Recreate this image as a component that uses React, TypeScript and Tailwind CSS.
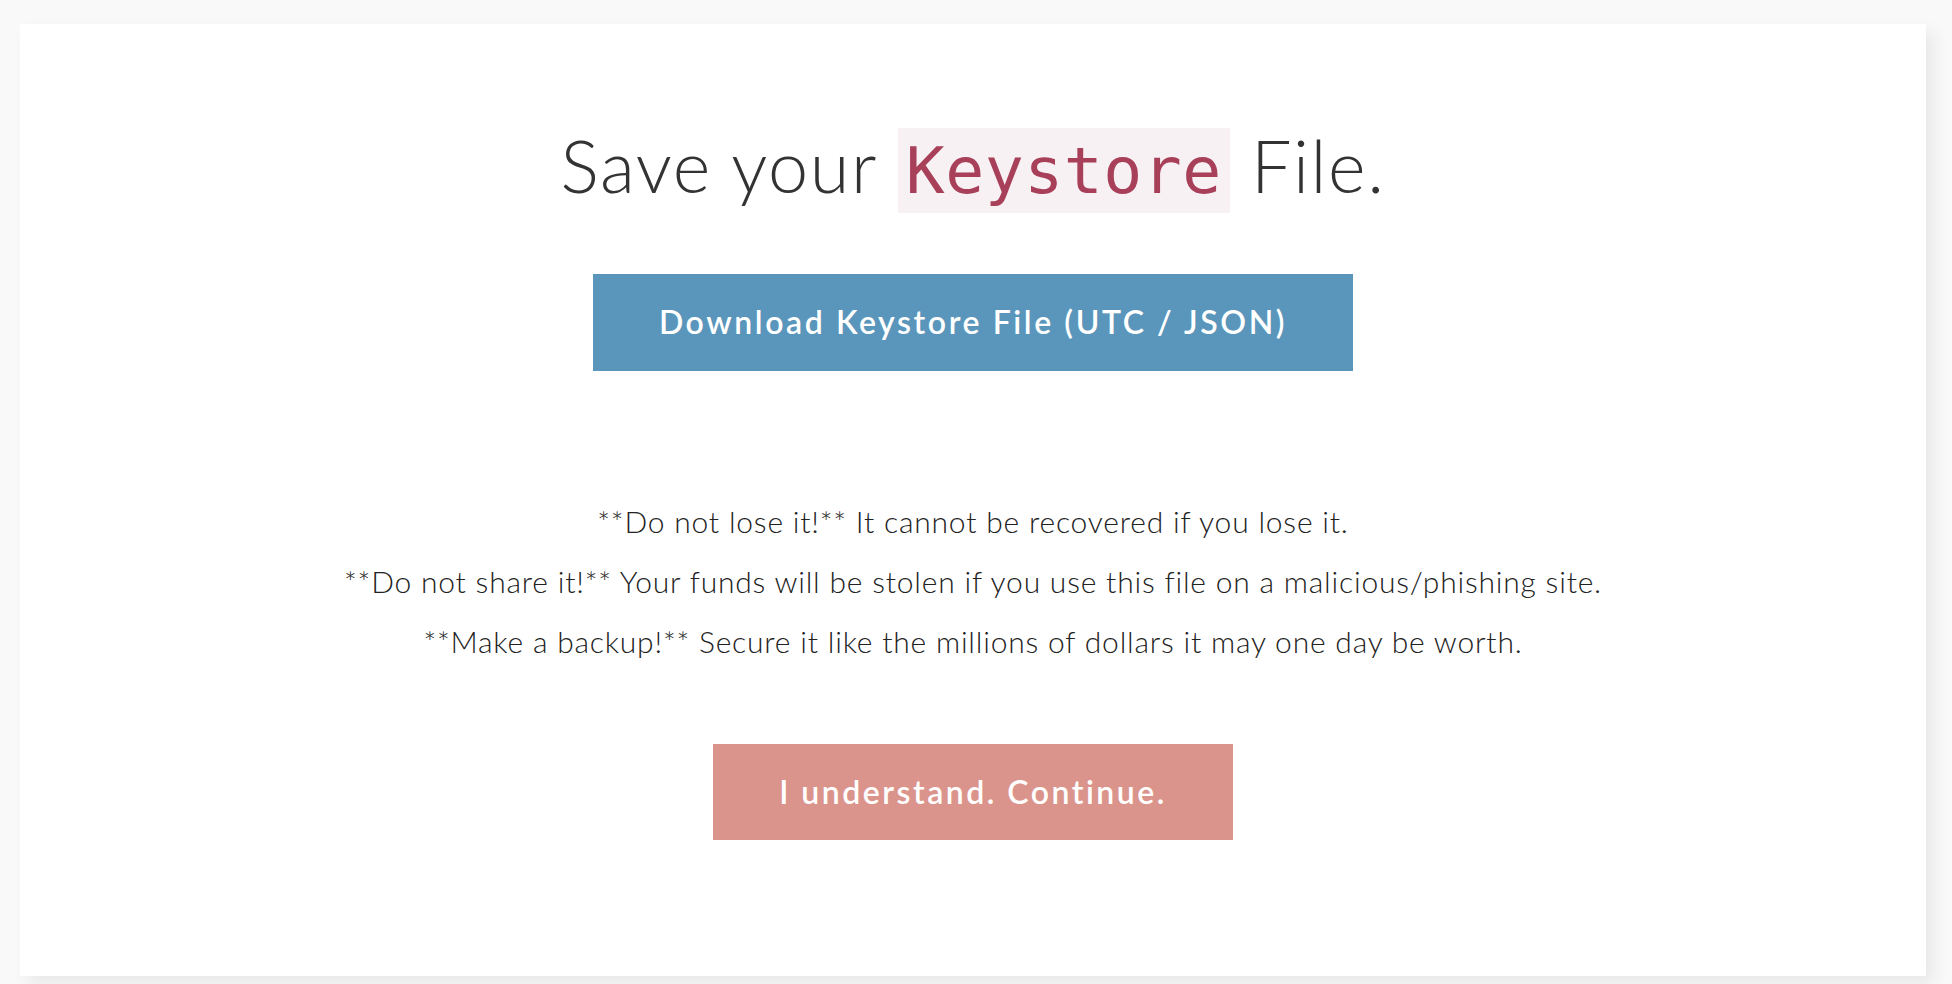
export default function App() {
  return (
    <div className="min-h-screen w-full bg-[#f9f9f9] pt-[24px] pl-[20px] pr-[26px] pb-[8px] font-['Lato',sans-serif]">
      <div className="bg-white h-[952px] shadow-[8px_8px_16px_rgba(0,0,0,0.07)] flex flex-col items-center pt-[98px] text-[#333]">
        <h1 className="text-[72px] font-light leading-[1.2] tracking-[1.6px] whitespace-nowrap">
          Save your{' '}
          <code className="font-['DejaVu_Sans_Mono',monospace] text-[0.9em] tracking-[0.5px] text-[#a8405a] bg-[#f7f1f3] px-[8px] py-[5px]">
            Keystore
          </code>{' '}
          File.
        </h1>

        <button className="mt-[64px] h-[97px] px-[66px] bg-[#5a96bb] text-white text-[32px] font-semibold tracking-[2.6px]">
          Download Keystore File (UTC / JSON)
        </button>

        <div className="mt-[120px] text-[30px] font-light text-center leading-[60px] tracking-[0.8px] text-[#222]">
          <p>**Do not lose it!** It cannot be recovered if you lose it.</p>
          <p>**Do not share it!** Your funds will be stolen if you use this file on a malicious/phishing site.</p>
          <p>**Make a backup!** Secure it like the millions of dollars it may one day be worth.</p>
        </div>

        <button className="mt-[73px] h-[96px] px-[66px] bg-[#db948b] text-white text-[32px] font-semibold tracking-[2.5px]">
          I understand. Continue.
        </button>
      </div>
    </div>
  );
}
